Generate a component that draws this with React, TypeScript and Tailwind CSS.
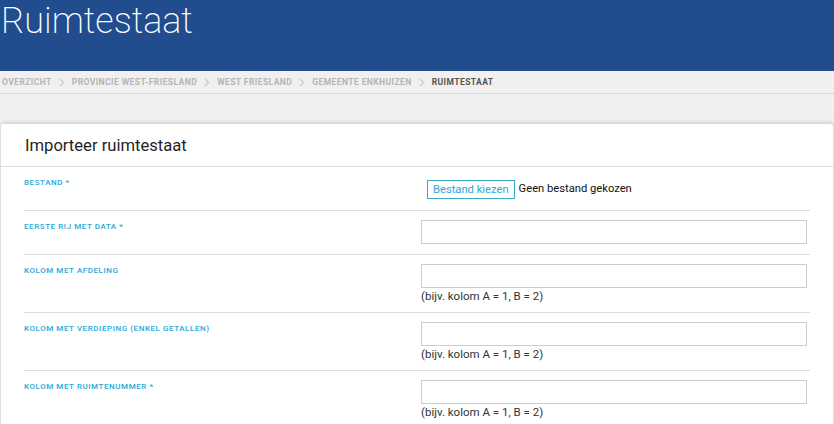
import React from 'react';

const crumbs = ['Overzicht', 'Provincie West-Friesland', 'West Friesland', 'Gemeente Enkhuizen'];

const Chevron = () => (
  <svg width="6" height="9" viewBox="0 0 6 9" className="mx-[7px]">
    <path d="M1 1l3.5 3.5L1 8" fill="none" stroke="#cacaca" strokeWidth="1.4" />
  </svg>
);

const Hint = () => (
  <p className="mt-[1px] text-[11.5px] leading-[14px] text-[#333]">(bijv. kolom A = 1, B = 2)</p>
);

const Label = ({ children }: { children: React.ReactNode }) => (
  <div className="text-[8px] font-medium uppercase leading-[10px] tracking-[0.07em] text-[#2aa9d4]">{children}</div>
);

const Row = ({ label, hint, last }: { label: string; hint?: boolean; last?: boolean }) => (
  <div className={`flex pt-[9px] ${hint ? 'pb-[9px]' : 'pb-[10px]'} ${last ? '' : 'border-b border-[#dcdcdc]'}`}>
    <div className="w-[397px] pt-[2px]">
      <Label>{label}</Label>
    </div>
    <div className="w-[386px]">
      <input className="block h-[24px] w-full border border-[#c7ced6] bg-white outline-none" />
      {hint && <Hint />}
    </div>
  </div>
);

export default function App() {
  return (
    <div className="min-h-[424px] bg-[#f0f0f0] font-['Roboto',sans-serif]">
      <header className="h-[71px] bg-[#214d8f] pl-[1px]">
        <h1 className="text-[36px] font-extralight leading-[42px] text-white">Ruimtestaat</h1>
      </header>

      <nav className="flex h-[23px] items-center border-b border-[#d8d8d8] pl-[2px] pt-[1px] text-[8.5px] font-bold uppercase tracking-[0.05em] text-[#b4b4b4]">
        {crumbs.map((c) => (
          <React.Fragment key={c}>
            <span>{c}</span>
            <Chevron />
          </React.Fragment>
        ))}
        <span className="text-[#555]">Ruimtestaat</span>
      </nav>

      <div className="px-[1px] pt-[30px]">
        <section className="rounded-t-[3px] bg-white shadow-[0_-1px_4px_rgba(0,0,0,0.18)]">
          <div className="border-b border-[#dcdcdc] px-[24px] pb-[10px] pt-[11px]">
            <h2 className="text-[16.6px] leading-[21px] text-[#1f1f2a]">Importeer ruimtestaat</h2>
          </div>
          <div className="px-[23px]">
            <div className="flex border-b border-[#dcdcdc] pb-[11px] pt-[10px]">
              <div className="w-[403px] pt-[1px]">
                <Label>Bestand *</Label>
              </div>
              <div className="flex h-[22px] items-center pt-[2px] text-[11.2px]">
                <span className="border border-[#3aa9c6] px-[5px] leading-[17px] text-[#2aa9d4]">Bestand kiezen</span>
                <span className="ml-[4px] text-[#111]">Geen bestand gekozen</span>
              </div>
            </div>
            <Row label="Eerste rij met data *" />
            <Row label="Kolom met afdeling" hint />
            <Row label="Kolom met verdieping (enkel getallen)" hint />
            <Row label="Kolom met ruimtenummer *" hint last />
          </div>
        </section>
      </div>
    </div>
  );
}
